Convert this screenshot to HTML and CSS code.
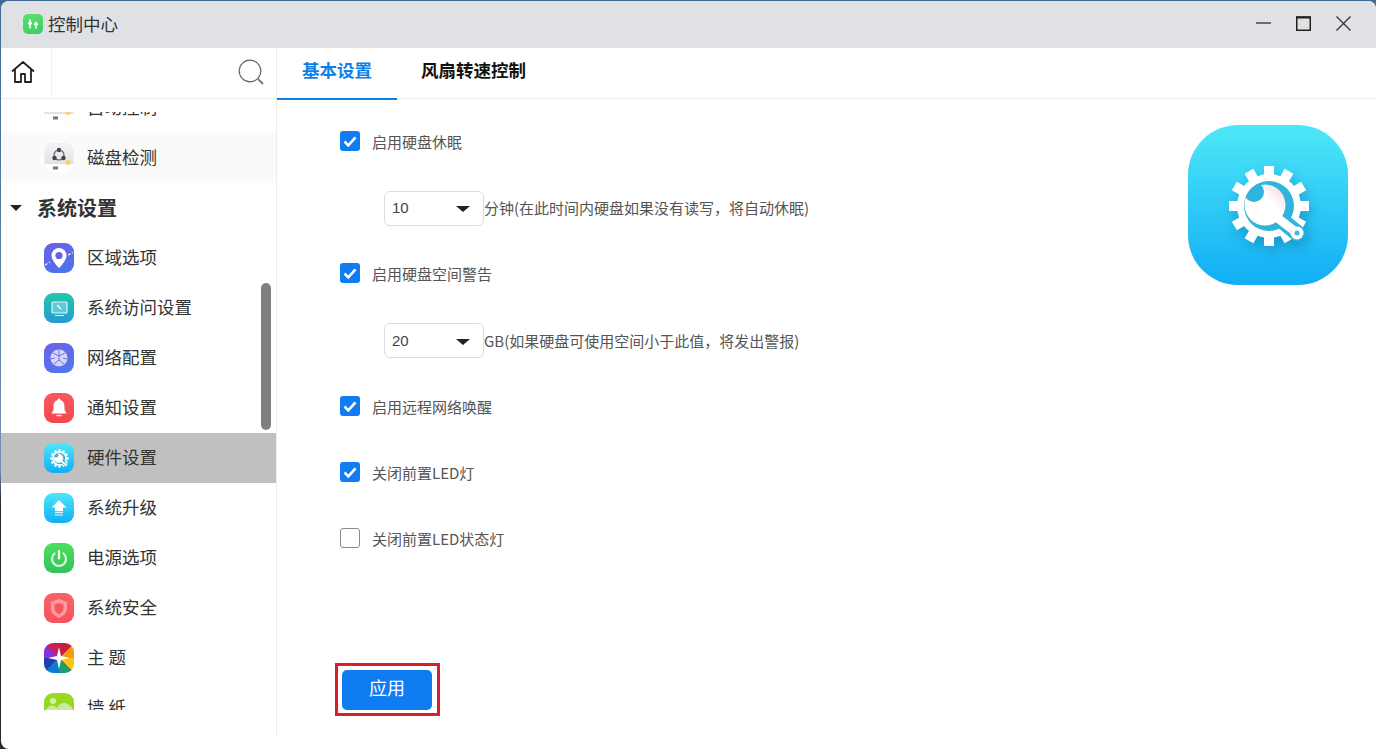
FILE: index.html
```html
<!DOCTYPE html>
<html lang="zh-CN">
<head>
<meta charset="utf-8">
<title>控制中心</title>
<link rel="stylesheet" href="styles.css">
</head>
<body>
<svg class="defs" width="0" height="0" aria-hidden="true">
  <defs>
    <linearGradient id="headGrad" x1="1" y1="0" x2="0" y2="1"><stop offset="0" stop-color="#f0d5d8"/><stop offset=".4" stop-color="#fff"/></linearGradient>
    <clipPath id="ringInner"><circle cx="50" cy="50" r="25"/></clipPath>
    <symbol id="gear" viewBox="0 0 100 100">
      <g fill="#fff">
        <rect x="45" y="10" width="10" height="13"/>
        <rect x="45" y="10" width="10" height="13" transform="rotate(30 50 50)"/>
        <rect x="45" y="10" width="10" height="13" transform="rotate(60 50 50)"/>
        <rect x="45" y="10" width="10" height="13" transform="rotate(90 50 50)"/>
        <rect x="45" y="10" width="10" height="13" transform="rotate(120 50 50)"/>
        <rect x="45" y="10" width="10" height="13" transform="rotate(150 50 50)"/>
        <rect x="45" y="10" width="10" height="13" transform="rotate(180 50 50)"/>
        <rect x="45" y="10" width="10" height="13" transform="rotate(210 50 50)"/>
        <rect x="45" y="10" width="10" height="13" transform="rotate(240 50 50)"/>
        <rect x="45" y="10" width="10" height="13" transform="rotate(270 50 50)"/>
        <rect x="45" y="10" width="10" height="13" transform="rotate(300 50 50)"/>
        <rect x="45" y="10" width="10" height="13" transform="rotate(330 50 50)"/>
        <circle cx="50" cy="50" r="32"/>
      </g>
      <circle cx="50" cy="50" r="25" fill="#2fb4dc"/>
      <path d="M60 62 L78 77" stroke="#2fb4dc" stroke-width="16" stroke-linecap="round"/>
      <circle cx="46" cy="49" r="20.500" fill="url(#headGrad)"/>
      <path d="M56 60 L78 77" stroke="#fff" stroke-width="9"/>
      <circle cx="78" cy="77" r="6.500" fill="#fff"/>
      <circle cx="35" cy="36" r="10" fill="#2fb4dc" clip-path="url(#ringInner)"/>
      <circle cx="78" cy="77" r="2.500" fill="#35bde6"/>
    </symbol>
  </defs>
</svg>
<div class="window">
  <header class="titlebar">
    <div class="title">
      <span class="appicon">
        <svg viewBox="0 0 20 20" width="20" height="20"><path d="M7 6v4M5.500 9l1.500 2 1.500-2M7 11v3" stroke="#fff" stroke-width="1.600" fill="none" stroke-linecap="round"/><path d="M13 14V9M11.500 10.500L13 8.500l1.500 2" stroke="#fff" stroke-width="1.600" fill="none" stroke-linecap="round"/></svg>
      </span>
      <span>控制中心</span>
    </div>
    <div class="winctrls">
      <svg viewBox="0 0 15 15" width="15" height="15"><path d="M0 7H15" stroke="#444" stroke-width="1.500"/></svg>
      <svg viewBox="0 0 15 15" width="15" height="15"><rect x=".75" y="1" width="13.500" height="13.250" fill="none" stroke="#222" stroke-width="1.500"/><path d="M0 1.500H15" stroke="#222" stroke-width="2"/></svg>
      <svg viewBox="0 0 15 15" width="15" height="15"><path d="M.5.500L14.500 14.500M14.500.500L.5 14.500" stroke="#333" stroke-width="1.300"/></svg>
    </div>
  </header>
  <div class="body">
    <aside class="sidebar">
      <div class="sidehead">
        <div class="homebtn">
          <svg viewBox="0 0 24 22" width="24" height="22"><path d="M1 10.500L12 1l11 9.500M4 8.500V21h6v-8h4v8h6V8.500" fill="none" stroke="#222" stroke-width="1.800" stroke-linejoin="round"/></svg>
        </div>
        <svg class="search" viewBox="0 0 26 26" width="26" height="26"><circle cx="12" cy="12" r="10.800" fill="none" stroke="#666" stroke-width="1.200"/><path d="M20 20l5 5" stroke="#777" stroke-width="1.800"/></svg>
      </div>
      <div class="list">
        <div class="item first">
          <span class="ic ic-disk"><svg viewBox="0 0 30 30" width="30" height="30"><path d="M0 21H30V30H0Z" fill="#fff"/><rect x="9" y="23.500" width="5" height="3" fill="#777"/><circle cx="24" cy="19.500" r="2.500" fill="#f5d36a"/></svg></span>
          <span>自动控制</span>
        </div>
        <div class="item soft">
          <span class="ic ic-disk"><svg viewBox="0 0 30 30" width="30" height="30"><path d="M0 21H30V30H0Z" fill="#fff"/><rect x="9" y="23.500" width="5" height="3" fill="#777"/><circle cx="24" cy="19.500" r="2.500" fill="#f5d36a"/><circle cx="15" cy="12" r="5" fill="none" stroke="#666" stroke-width="1.200"/><circle cx="15" cy="7" r="2.200" fill="#444"/><circle cx="10.500" cy="15" r="2.200" fill="#444"/><circle cx="19.500" cy="15" r="2.200" fill="#444"/></svg></span>
          <span>磁盘检测</span>
        </div>
        <div class="section"><span class="caret big"></span><span>系统设置</span></div>
        <div class="item">
          <span class="ic ic-region"><svg viewBox="0 0 30 30" width="30" height="30"><path d="M15 5a7.500 7.500 0 0 0-7.500 7.500C7.500 18 15 25 15 25s7.500-7 7.500-12.500A7.500 7.500 0 0 0 15 5z" fill="#fff"/><circle cx="15" cy="12.500" r="3.600" fill="#6a62e6"/><path d="M1 22l5-3M24 12l5-2.500" stroke="#fff" stroke-width="1.300" stroke-dasharray="3 1.500" opacity=".85"/></svg></span>
          <span>区域选项</span>
        </div>
        <div class="item">
          <span class="ic ic-access"><svg viewBox="0 0 30 30" width="30" height="30"><rect x="8" y="9" width="15" height="11" rx="1" fill="#5fc9d6" stroke="#dff6f7" stroke-width="1.200"/><path d="M13 12l4 4" stroke="#fff" stroke-width="1.200"/><path d="M11 22.500h9" stroke="#dff6f7" stroke-width="1.200"/></svg></span>
          <span>系统访问设置</span>
        </div>
        <div class="item">
          <span class="ic ic-net"><svg viewBox="0 0 30 30" width="30" height="30"><circle cx="15" cy="15" r="8.500" fill="#d7d7fb"/><path d="M15 7v6l-6-3M15 13l6-3M15 13v4l-5 4M15 17l5 4M7 16l4-1M23 16l-4-1" stroke="#6a6ce8" stroke-width="1" fill="none"/></svg></span>
          <span>网络配置</span>
        </div>
        <div class="item">
          <span class="ic ic-bell"><svg viewBox="0 0 30 30" width="30" height="30"><path d="M15 7c-3.800 0-5.500 3-5.500 6v4L7.500 20.500h15L20.500 17v-4c0-3-1.700-6-5.500-6z" fill="#fff"/><circle cx="15" cy="6.800" r="1.300" fill="#fff"/><path d="M13 22.500h4" stroke="#ffd5d5" stroke-width="1.500" stroke-linecap="round"/></svg></span>
          <span>通知设置</span>
        </div>
        <div class="item active">
          <span class="ic ic-hw"><svg width="23" height="23"><use href="#gear"/></svg></span>
          <span>硬件设置</span>
        </div>
        <div class="item">
          <span class="ic ic-up"><svg viewBox="0 0 30 30" width="30" height="30"><path d="M15 7l7.500 7.500H19V18h-8v-3.500H7.500z" fill="#fff"/><path d="M11 19.500h8" stroke="#fff" stroke-width="1.500" opacity=".8"/><path d="M11 22h8" stroke="#fff" stroke-width="1.500" opacity=".6"/></svg></span>
          <span>系统升级</span>
        </div>
        <div class="item">
          <span class="ic ic-power"><svg viewBox="0 0 30 30" width="30" height="30"><path d="M10.500 10.500a7 7 0 1 0 9 0" fill="none" stroke="#d9f7dc" stroke-width="2.200" stroke-linecap="round"/><path d="M15 8v7.500" stroke="#fff" stroke-width="2.200" stroke-linecap="round"/></svg></span>
          <span>电源选项</span>
        </div>
        <div class="item">
          <span class="ic ic-shield"><svg viewBox="0 0 30 30" width="30" height="30"><path d="M15 6l8 3v6c0 5-3.500 8-8 10-4.500-2-8-5-8-10V9z" fill="#ffb0ae" opacity=".75"/><path d="M15 10l4.500 1.500v4c0 2.800-2 4.500-4.500 5.700-2.500-1.200-4.500-2.900-4.500-5.700v-4z" fill="#f4585f"/></svg></span>
          <span>系统安全</span>
        </div>
        <div class="item">
          <span class="ic ic-theme"><svg viewBox="0 0 30 30" width="30" height="30"><path d="M15 4l2 9 9 2-9 2-2 9-2-9-9-2 9-2z" fill="#fff"/></svg></span>
          <span>主 题</span>
        </div>
        <div class="item">
          <span class="ic ic-wall"><svg viewBox="0 0 30 30" width="30" height="30"><circle cx="9" cy="8" r="3" fill="#d6f0a6"/><path d="M0 20c4-9 10-9 13-5 3-7 12-7 17 3v12H0z" fill="#c9e9a0"/></svg></span>
          <span>墙 纸</span>
        </div>
      </div>
      <div class="scrollthumb"></div>
    </aside>
    <main class="main">
      <nav class="tabs">
        <div class="tab on">基本设置</div>
        <div class="tab">风扇转速控制</div>
      </nav>
      <div class="content">
        <form class="form">
          <div class="row"><span class="check on"><svg viewBox="0 0 20 20" width="20" height="20"><path d="M4.500 10.500l3.800 3.800 7.200-8" fill="none" stroke="#fff" stroke-width="2.600"/></svg></span><span>启用硬盘休眠</span></div>
          <div class="row sub"><div class="select"><span>10</span><span class="caret"></span></div><span>分钟(在此时间内硬盘如果没有读写，将自动休眠)</span></div>
          <div class="row"><span class="check on"><svg viewBox="0 0 20 20" width="20" height="20"><path d="M4.500 10.500l3.800 3.800 7.200-8" fill="none" stroke="#fff" stroke-width="2.600"/></svg></span><span>启用硬盘空间警告</span></div>
          <div class="row sub"><div class="select"><span>20</span><span class="caret"></span></div><span>GB(如果硬盘可使用空间小于此值，将发出警报)</span></div>
          <div class="row"><span class="check on"><svg viewBox="0 0 20 20" width="20" height="20"><path d="M4.500 10.500l3.800 3.800 7.200-8" fill="none" stroke="#fff" stroke-width="2.600"/></svg></span><span>启用远程网络唤醒</span></div>
          <div class="row"><span class="check on"><svg viewBox="0 0 20 20" width="20" height="20"><path d="M4.500 10.500l3.800 3.800 7.200-8" fill="none" stroke="#fff" stroke-width="2.600"/></svg></span><span>关闭前置LED灯</span></div>
          <div class="row"><span class="check"></span><span>关闭前置LED状态灯</span></div>
          <div class="applybox"><button class="apply" type="button">应用</button></div>
        </form>
        <div class="hero">
          <svg class="herogear" width="100" height="100"><use href="#gear"/></svg>
        </div>
      </div>
    </main>
  </div>
</div>
</body>
</html>
```

FILE: styles.css
```css
* { box-sizing: border-box; }
html, body { margin: 0; height: 100%; }
body {
  background: linear-gradient(180deg, #3f6b96 0, #6f90b2 470px, #2b2b33 500px, #2b2b33 100%);
  font-family: "Noto Sans CJK SC", "Liberation Sans", sans-serif;
  color: #333;
  overflow: hidden;
}
.defs { position: absolute; }
.window {
  margin: 1px 0 0 1px;
  height: 748px;
  width: 1375px;
  background: #fff;
  border-radius: 8px 8px 0 8px;
  overflow: hidden;
  display: flex;
  flex-direction: column;
}
.titlebar {
  height: 47px;
  flex: none;
  background: #dfe1e5;
  display: flex;
  align-items: center;
  justify-content: space-between;
  padding: 0 25px 2px 22px;
}
.title {
  display: flex;
  align-items: center;
  gap: 5px;
  font-size: 17.5px;
  color: #333;
  line-height: 24px;
}
.appicon {
  width: 20px;
  height: 20px;
  border-radius: 5px;
  background: linear-gradient(160deg, #5ee06a, #35cf63);
  display: flex;
}
.winctrls { display: flex; gap: 25px; align-items: center; }
.body { flex: 1; display: flex; min-height: 0; }
.sidebar {
  width: 275px;
  flex: none;
  position: relative;
  height: 688px;
  display: flex;
  flex-direction: column;
  background: #fff;
}
.sidehead {
  height: 51px;
  flex: none;
  display: flex;
  align-items: center;
  justify-content: space-between;
  border-bottom: 1px solid #ececec;
  padding-right: 12px;
}
.homebtn {
  width: 51px;
  height: 47px;
  border-right: 1px solid #f0f0f0;
  margin-top: -3px;
  padding-left: 10px;
  display: flex;
  align-items: center;
}
.search { margin-top: -2px; }
.list {
  margin-top: 13px;
  height: 598px;
  overflow: hidden;
  font-size: 17.5px;
}
.item {
  height: 50px;
  display: flex;
  align-items: center;
  padding-left: 43px;
  gap: 13px;
  color: #333;
  line-height: 24px;
  white-space: pre;
}
.item > span:last-child, .section > span:last-child { margin-top: -2px; }
.item.first { margin-top: -29px; }
.item.soft { background: #fafafa; }
.item.active { background: #c0c0c0; }
.section {
  height: 50px;
  display: flex;
  align-items: center;
  padding-left: 9px;
  gap: 15px;
  font-size: 20px;
  font-weight: 700;
  color: #333;
}
.caret {
  width: 0;
  height: 0;
  border-left: 7px solid transparent;
  border-right: 7px solid transparent;
  border-top: 6px solid #222;
  display: block;
}
.caret.big { border-left-width: 6px; border-right-width: 6px; }
.ic {
  width: 30px;
  height: 30px;
  flex: none;
  border-radius: 9px;
  overflow: hidden;
  display: flex;
  align-items: center;
  justify-content: center;
}
.ic-disk { background: linear-gradient(180deg, #f4f4f6, #d8dae0); box-shadow: 0 0 0 1px #eceef2 inset; }
.ic-region { background: linear-gradient(160deg, #6d60e8, #4a75e8); }
.ic-access { background: linear-gradient(180deg, #22c9a6, #2799d6); }
.ic-net { background: linear-gradient(160deg, #6f63e8, #4c78ec); }
.ic-bell { background: linear-gradient(180deg, #f9585e, #f4474f); }
.ic-hw { background: linear-gradient(180deg, #4ee7f7, #11aef5); }
.ic-up { background: linear-gradient(180deg, #4ee7f7, #11aef5); }
.ic-power { background: linear-gradient(180deg, #4ddf5c, #35c25a); }
.ic-shield { background: linear-gradient(180deg, #f9626a, #f6525c); }
.ic-theme { background: conic-gradient(#c81e3c 0 45deg, #f59e0b 45deg 90deg, #fcc419 90deg 135deg, #1f9d6a 135deg 180deg, #0e7bd0 180deg 225deg, #1e3fae 225deg 270deg, #8b2fd6 270deg 315deg, #c81e5c 315deg 360deg); }
.ic-wall { background: linear-gradient(180deg, #9bdc22, #86d028); }
.scrollthumb {
  position: absolute;
  left: 260px;
  top: 235px;
  width: 10px;
  height: 147px;
  border-radius: 5px;
  background: #808080;
}
.main {
  flex: 1;
  display: flex;
  flex-direction: column;
  min-width: 0;
  border-left: 1px solid #ececec;
  height: 688px;
}
.tabs {
  height: 51px;
  flex: none;
  display: flex;
  border-bottom: 1px solid #ececec;
}
.tab {
  padding: 0 24px;
  font-size: 17.5px;
  font-weight: 700;
  color: #111;
  line-height: 44px;
  height: 52px;
}
.tab.on {
  color: #0f7fe8;
  border-bottom: 2px solid #0f7fe8;
  width: 120px;
  padding-left: 25px;
}
.content {
  flex: 1;
  display: flex;
  justify-content: space-between;
  align-items: flex-start;
  padding: 9px 28px 0 63px;
}
.form { display: flex; flex-direction: column; }
.row {
  height: 66.2px;
  flex: none;
  display: flex;
  align-items: center;
  gap: 12px;
  font-size: 15px;
  color: #555;
  line-height: 20px;
  white-space: nowrap;
}
.row:not(.sub) > span:last-child { margin-top: 1.5px; }
.row.sub { padding: 2px 0 0 44px; gap: 0; }
.check {
  width: 20px;
  height: 20px;
  flex: none;
  border-radius: 3px;
  border: 1px solid #8a8a8a;
  background: #fff;
  display: block;
}
.check.on { background: #0f7cf2; border: 0; }
.check svg { display: block; }
.select {
  width: 100px;
  height: 35px;
  border: 1px solid #dcdcdc;
  border-radius: 6px;
  display: flex;
  align-items: center;
  justify-content: space-between;
  padding: 0 13px 0 7px;
  font-family: "Liberation Sans", sans-serif;
  font-size: 15px;
  color: #444;
}
.select .caret { margin-top: 2px; }
.applybox {
  margin: 91.6px 0 0 -5px;
  width: 105px;
  height: 53px;
  border: 3px solid #d81f2b;
  padding: 4px;
}
.apply {
  width: 90px;
  height: 40px;
  border: 0;
  border-radius: 5px;
  background: #0f7cf2;
  color: #fff;
  font-family: "Noto Sans CJK SC", sans-serif;
  font-size: 18px;
  line-height: 24px;
  padding: 0 0 5px;
  display: block;
}
.hero {
  width: 160px;
  height: 160px;
  margin-top: 17px;
  padding: 1px 0 0 2px;
  border-radius: 50px;
  background: linear-gradient(180deg, #4ee7f7, #11aef5);
  display: flex;
  align-items: center;
  justify-content: center;
}
.herogear { filter: drop-shadow(3px 6px 6px rgba(10, 90, 140, .35)); }
```
